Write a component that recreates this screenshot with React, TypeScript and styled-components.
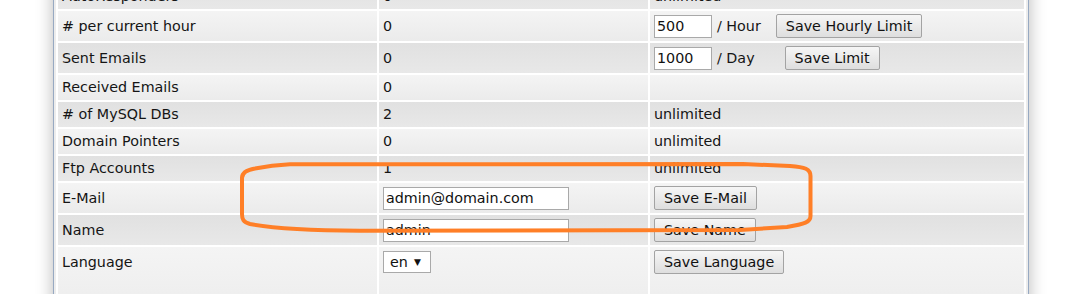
import React, { ReactElement, ReactNode } from "react";
import styled, { createGlobalStyle, css } from "styled-components";

const FONT = `"DejaVu Sans", Verdana, sans-serif`;

const GlobalStyle = createGlobalStyle`
  html, body {
    margin: 0;
    padding: 0;
    background: #ffffff;
    overflow: hidden;
  }

  body {
    font-family: ${FONT};
    font-size: 14.3px;
    color: #151515;
  }
`;

const Page = styled.div`
  position: relative;
  display: flow-root;
  width: 1078px;
  height: 294px;
  padding-left: 53px;
  box-sizing: border-box;
`;

const Panel = styled.div`
  width: 976px;
  margin-top: -20px;
  padding: 2px;
  box-sizing: border-box;

  background: #ececec;
  border-left: 1px solid #97a9c2;
  border-right: 1px solid #97a9c2;
  box-shadow: 0 0 16px rgba(0, 0, 0, 0.28);
`;

const Table = styled.table`
  width: 970px;
  border-spacing: 2px;
  background: #ffffff;
  table-layout: fixed;
`;

const Inner = styled.div`
  display: flex;
  align-items: center;
  min-height: 19px;
  line-height: 17px;
  white-space: nowrap;
`;

const Row = styled.tr<{ $dark?: boolean; $top?: boolean }>`
  td {
    background: ${(p) =>
      p.$dark
        ? "linear-gradient(#e1e1e1, #e8e8e8)"
        : "linear-gradient(#f4f4f4, #ebebeb)"};
  }

  ${(p) =>
    p.$top &&
    css`
      height: 80px;

      td {
        vertical-align: top;
      }

      ${Inner} {
        min-height: 24px;
      }
    `}
`;

const Cell = styled.td<{ $w?: number }>`
  width: ${(p) => (p.$w ? `${p.$w}px` : "auto")};
  padding: 3px 4px;
  box-sizing: border-box;
  vertical-align: middle;
`;

const TextInput = styled.input<{ $w: number }>`
  width: ${(p) => p.$w}px;
  height: 23px;
  padding: 0 2px;
  box-sizing: border-box;

  font-family: ${FONT};
  font-size: 14.3px;
  color: #111;
  background: #ffffff;
  border: 1px solid #a9a9a9;
  border-radius: 0;
  outline: none;
`;

const Unit = styled.span<{ $gap: number }>`
  margin-left: 5px;
  margin-right: ${(p) => p.$gap}px;
`;

const Button = styled.button`
  height: 24px;
  padding: 0 9px;
  box-sizing: border-box;

  font-family: ${FONT};
  font-size: 14.3px;
  color: #111;
  background: linear-gradient(#f6f6f6, #dedede);
  border: 1px solid #a3a3a3;
  border-radius: 2px;
  cursor: pointer;
`;

const SelectBox = styled.span`
  display: inline-flex;
  align-items: center;
  width: 48px;
  height: 22px;
  padding: 0 0 0 6px;
  box-sizing: border-box;

  background: #ffffff;
  border: 1px solid #a9a9a9;
`;

const Select = styled.select`
  appearance: none;
  width: 24px;
  padding: 0;
  border: none;
  background: transparent;
  outline: none;

  font-family: ${FONT};
  font-size: 14.3px;
  color: #111;
`;

const Arrow = styled.span`
  font-size: 9px;
  color: #111;
`;

const Annotation = styled.svg`
  position: absolute;
  left: 0;
  top: 0;
  pointer-events: none;
`;

type RowData = {
  label: string;
  value: ReactNode;
  extra: ReactNode;
  dark?: boolean;
  top?: boolean;
};

const rows: RowData[] = [
  { label: "AutoResponders", value: "0", extra: "unlimited", dark: true },
  {
    label: "# per current hour",
    value: "0",
    extra: (
      <>
        <TextInput $w={58} defaultValue="500" />
        <Unit $gap={15}>/ Hour</Unit>
        <Button>Save Hourly Limit</Button>
      </>
    ),
  },
  {
    label: "Sent Emails",
    value: "0",
    extra: (
      <>
        <TextInput $w={58} defaultValue="1000" />
        <Unit $gap={30}>/ Day</Unit>
        <Button>Save Limit</Button>
      </>
    ),
    dark: true,
  },
  { label: "Received Emails", value: "0", extra: "" },
  { label: "# of MySQL DBs", value: "2", extra: "unlimited", dark: true },
  { label: "Domain Pointers", value: "0", extra: "unlimited" },
  { label: "Ftp Accounts", value: "1", extra: "unlimited", dark: true },
  {
    label: "E-Mail",
    value: <TextInput $w={186} defaultValue="admin@domain.com" />,
    extra: <Button>Save E-Mail</Button>,
  },
  {
    label: "Name",
    value: <TextInput $w={186} defaultValue="admin" />,
    extra: <Button>Save Name</Button>,
    dark: true,
  },
  {
    label: "Language",
    value: (
      <SelectBox>
        <Select defaultValue="en">
          <option value="en">en</option>
        </Select>
        <Arrow>▼</Arrow>
      </SelectBox>
    ),
    extra: <Button>Save Language</Button>,
    top: true,
  },
];

const App = (): ReactElement => {
  return (
    <Page>
      <GlobalStyle />
      <Panel>
        <Table>
          <tbody>
            {rows.map((row) => (
              <Row key={row.label} $dark={row.dark} $top={row.top}>
                <Cell $w={319}>
                  <Inner>{row.label}</Inner>
                </Cell>
                <Cell $w={269}>
                  <Inner>{row.value}</Inner>
                </Cell>
                <Cell>
                  <Inner>{row.extra}</Inner>
                </Cell>
              </Row>
            ))}
          </tbody>
        </Table>
      </Panel>

      {/* hand-drawn highlight round the e-mail row */}
      <Annotation width="1078" height="294" viewBox="0 0 1078 294">
        <path
          d="M 290 164.3 L 743 164 L 790 166 C 805 167 810.5 169 810.5 176 L 810.5 216 C 810.5 222 805 224 787 227 L 740 230 L 360 230.7 C 300 230.5 265 227 250 224 C 243 222 242 219 242 214 L 242 178 C 242 173 246 170 255 168.5 C 265 166.5 275 165 290 164.3 Z"
          fill="none"
          stroke="#ff7f27"
          strokeWidth="4"
          strokeLinejoin="round"
        />
      </Annotation>
    </Page>
  );
};

export default App;
